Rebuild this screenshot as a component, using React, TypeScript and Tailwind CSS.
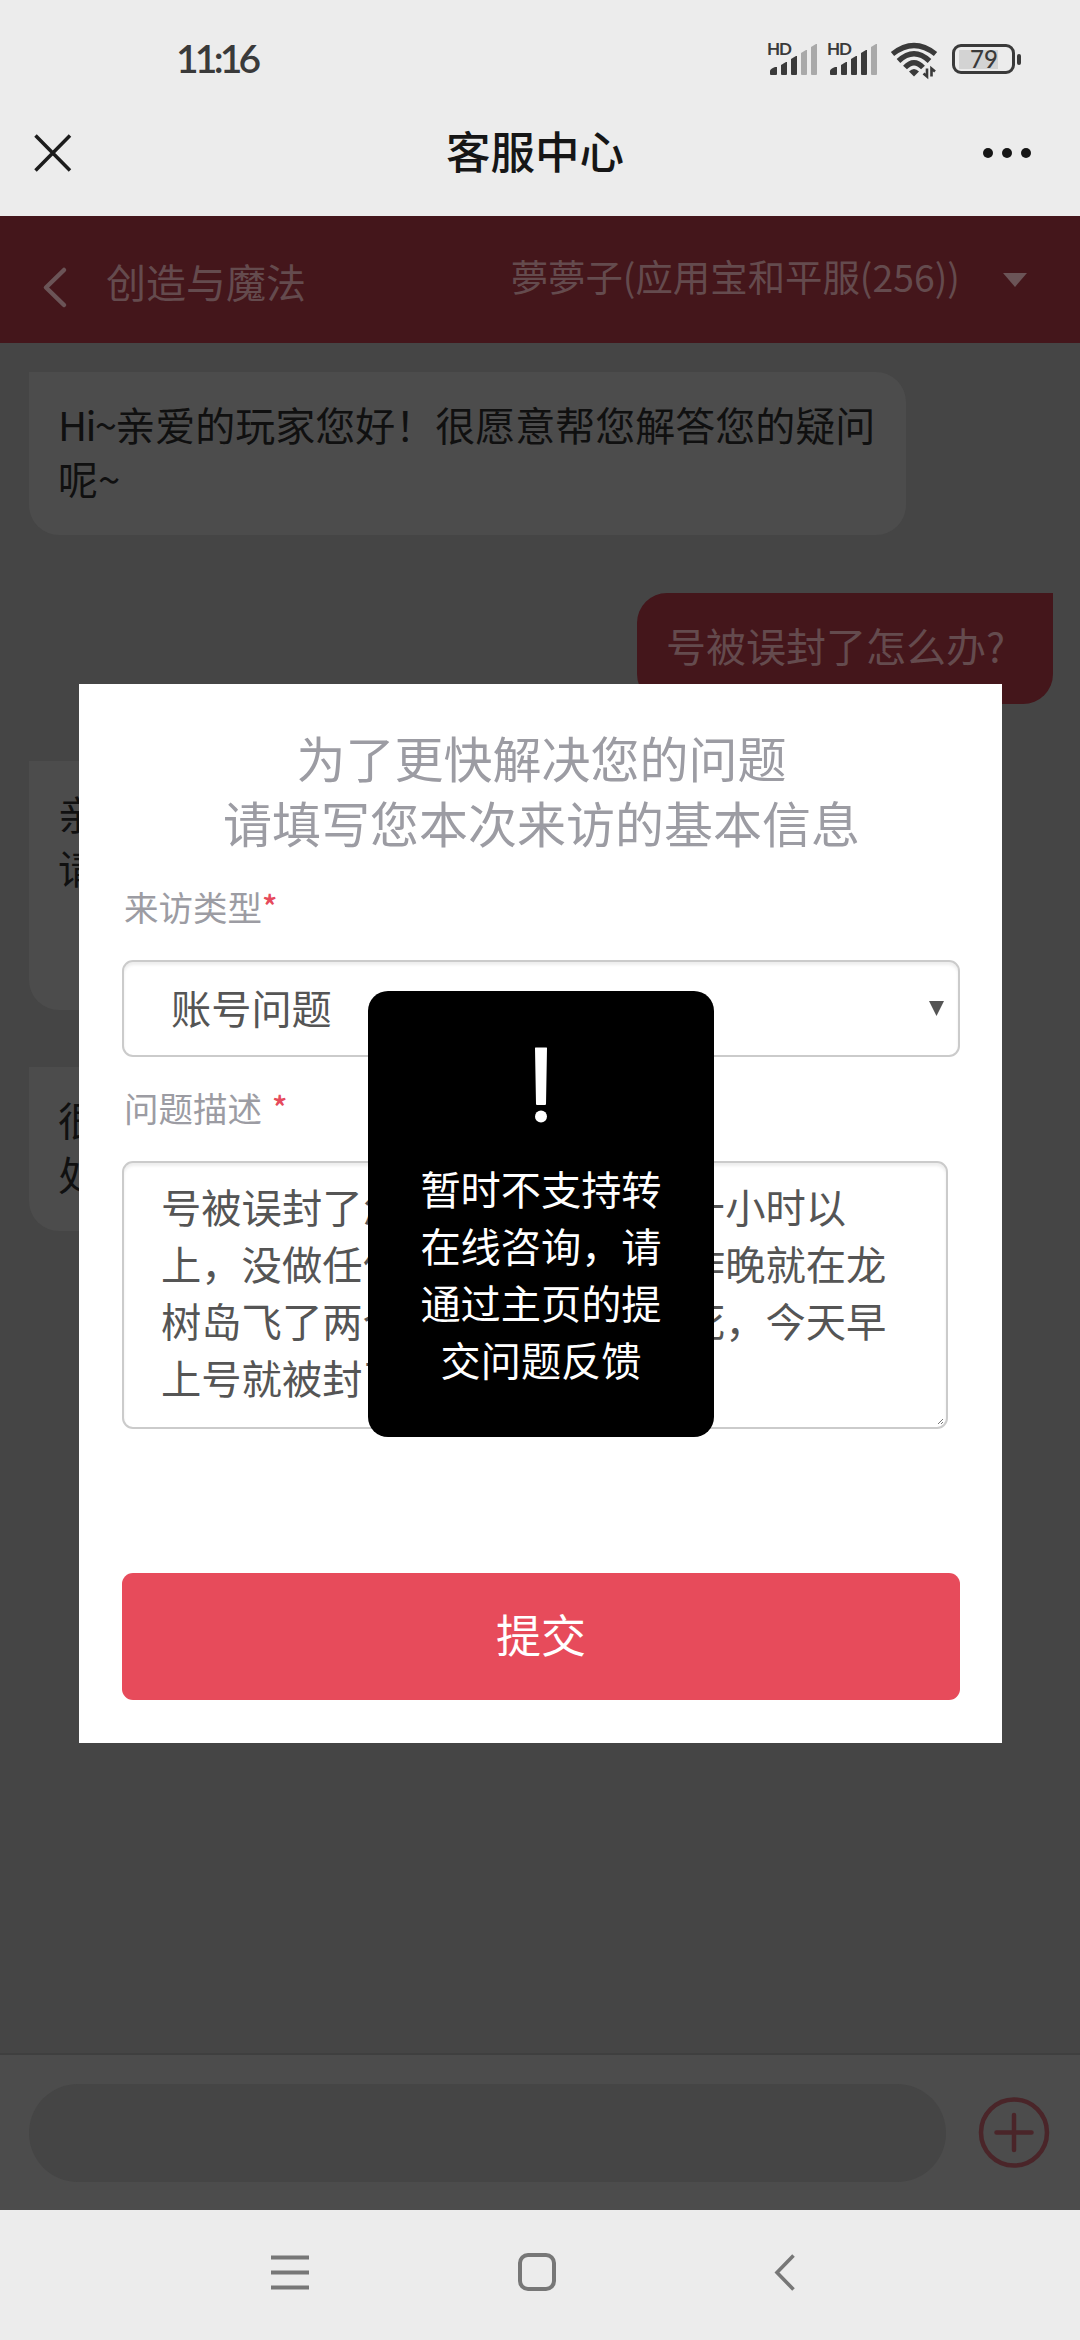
import React from "react";

const FONT = "font-['Noto_Sans_CJK_SC',sans-serif]";

interface BubbleProps {
  lines: React.ReactNode[];
  mine?: boolean;
  className: string;
}

const Bubble: React.FC<BubbleProps> = ({ lines, mine = false, className }) => (
  <div
    className={`shrink-0 px-[29px] pt-[26px] text-[40px] leading-[53.5px] whitespace-nowrap ${
      mine
        ? "self-end rounded-[30px] rounded-tr-none bg-[#44161b] text-[#644b4e]"
        : "self-start rounded-[30px] rounded-tl-none bg-[#4c4c4c] text-[#101010]"
    } ${className}`}
  >
    {lines.map((line, i) => (
      <div key={i}>{line}</div>
    ))}
  </div>
);

interface SignalProps {
  level: number;
}

const BARS = [
  "M2 30v-3q0-2 5-4h2v7q0 1-1 1h-5q-1 0-1-1z",
  "M13 30V21l5-3h1v12q0 1-1 1h-4q-1 0-1-1z",
  "M23 30V15l5-3h1v18q0 1-1 1h-4q-1 0-1-1z",
  "M33 30V9l5-3h1v24q0 1-1 1h-4q-1 0-1-1z",
  "M43 30V3l5-3h1v30q0 1-1 1h-4q-1 0-1-1z"
];

const Signal: React.FC<SignalProps> = ({ level }) => (
  <div className="relative h-[36px] w-[50px]">
    <span className="absolute left-[-1px] top-[-4px] font-['Lato',sans-serif] text-[17px] leading-[18px] font-bold tracking-[-1px] text-[#3a3a3a]">
      HD
    </span>
    <svg className="block" width="50" height="36" viewBox="0 0 50 36">
      {BARS.map((d, i) => (
        <path key={d} d={d} fill={i < level ? "#3a3a3a" : "#a9a9a9"} />
      ))}
    </svg>
  </div>
);

const StatusBar = () => (
  <div className="flex h-[100px] items-start justify-between pl-[176px] pr-[59px] text-[#3a3a3a]">
    <span className="mt-[35px] font-['Lato',sans-serif] text-[39px] leading-[47px] font-semibold tracking-[-3.8px]">
      11:16
    </span>
    <div className="mt-[44px] flex items-start">
      <Signal level={3} />
      <div className="w-[10px]" />
      <Signal level={4} />
      <svg className="ml-[12px] block overflow-visible" width="48" height="36" viewBox="0 0 48 36" fill="none" stroke="#3a3a3a" strokeWidth="5.300">
        <path d="M2.500 10Q24-7 45.500 10" />
        <path d="M8.500 17Q24 2.500 39.500 17" />
        <path d="M15 23.500Q24 14 33 23.500" />
        <path d="M19 27.500Q24 22.500 29 27.500L24 32.500Z" fill="#3a3a3a" stroke="none" />
        <path d="M37 24.500v8l-3.500-3M41.500 32.500v-8l3.500 3" strokeWidth="2.600" />
      </svg>
      {/* Battery */}
      <div className="ml-[14px] flex items-center">
        <div className="flex h-[30px] w-[63px] items-center rounded-[9px] border-[3px] border-[#3a3a3a] p-[4px]">
          <div className="relative h-[19px] w-[39px] bg-[#d3d3d3]">
            <span className="absolute left-[11px] top-[-3px] font-['Lato',sans-serif] text-[24px] leading-[24px] font-medium">79</span>
          </div>
        </div>
        <div className="ml-[2px] h-[11px] w-[4px] rounded-sm bg-[#3a3a3a]" />
      </div>
    </div>
  </div>
);

const TitleBar = () => (
  <div className="flex h-[116px] items-start justify-between pl-[33px] pr-[49px]">
    <svg className="mt-[33px] block" width="40" height="40" viewBox="0 0 40 40" stroke="#1c1c1c" strokeWidth="3.500">
      <path d="M2.500 2.500L37 37.500M37 2.500L2.500 37.500" />
    </svg>
    <h1 className="mt-[20px] ml-[14px] text-[44.500px] leading-[60px] font-medium text-[#161616]">客服中心</h1>
    <div className="mt-[48px] flex gap-[9px]">
      <i className="size-[10px] rounded-full bg-[#161616]" />
      <i className="size-[10px] rounded-full bg-[#161616]" />
      <i className="size-[10px] rounded-full bg-[#161616]" />
    </div>
  </div>
);

const GameBar = () => (
  <div className="flex h-[127px] shrink-0 items-start bg-[#44161b] pl-[42px] text-[#644b4e]">
    <svg className="mt-[50px] block" width="26" height="43" viewBox="0 0 26 43" fill="none" stroke="#6b5457" strokeWidth="4.500" strokeLinecap="round" strokeLinejoin="round">
      <path d="M22 4L4 21.500L22 39" />
    </svg>
    <span className="mt-[35px] ml-[38px] text-[40px] leading-[60px]">创造与魔法</span>
    <span className="mt-[32px] mr-[43px] ml-auto text-[37.400px] leading-[56px]">夢夢子(应用宝和平服(256))</span>
    <svg className="mt-[57px] mr-[53px] block" width="24" height="14" viewBox="0 0 24 14" fill="#6b5457">
      <path d="M0 0h24L12 14z" />
    </svg>
  </div>
);

const Chat = () => (
  <div className="flex h-[1710px] shrink-0 flex-col bg-[#454545] pr-[27px] pl-[29px]">
    <Bubble
      className="mt-[29px] h-[163px] w-[877px]"
      lines={[
        <>
          <span className="tracking-[-1.7px]">Hi~</span>亲爱的玩家您好！很愿意帮您解答您的疑问
        </>,
        "呢~"
      ]}
    />
    <Bubble mine className="mt-[58px] h-[111px] w-[416px]" lines={["号被误封了怎么办?"]} />
    <Bubble className="mt-[57px] h-[249px] w-[877px]" lines={["亲爱的玩家您好", "请您描述一下问题"]} />
    <Bubble className="mt-[57px] h-[164px] w-[877px]" lines={["很抱歉给您带来不便", "处理中请稍候"]} />
  </div>
);

const InputBar = () => (
  <div className="flex h-[157px] shrink-0 items-start justify-between border-t-2 border-[#3f3f3f] bg-[#4c4c4c] pt-[29px] pr-[30px] pl-[29px]">
    <div className="h-[98px] w-[917px] rounded-[49px] bg-[#454545]" />
    <svg className="mt-[12px] block" width="72" height="72" viewBox="0 0 72 72" fill="none" stroke="#4a2529" strokeWidth="4.500" strokeLinecap="round">
      <circle cx="36" cy="36.500" r="33" />
      <path d="M18.500 36.500h35M36 19v35" />
    </svg>
  </div>
);

const NavBar = () => (
  <div className="flex h-[130px] shrink-0 items-start bg-[#ececec] pt-[42px] pl-[271px]">
    <svg className="block" width="38" height="42" viewBox="0 0 38 42" stroke="#777" strokeWidth="3.800">
      <path d="M0 5.500h38M0 20.500h38M0 35.500h38" />
    </svg>
    <div className="ml-[209px] mt-px size-[38px] rounded-[10px] border-4 border-[#777]" />
    <svg className="ml-[217px] block" width="24" height="42" viewBox="0 0 24 42" fill="none" stroke="#777" strokeWidth="3.600">
      <path d="M20.500 3.500L4 20.500L20.500 37.500" />
    </svg>
  </div>
);

const FIELD = "rounded-[11px] border-2 border-[#cbcbcb] bg-white text-[#555] shadow-[inset_0_3px_3px_rgba(0,0,0,0.07)]";

const DESCRIPTION = [
  "号被误封了怎么办？我玩了二十小时以",
  "上，没做任何违规操作，就是昨晚就在龙",
  "树岛飞了两个小时还被别人打死，今天早",
  "上号就被封了"
];

const FormModal = () => (
  <div className="absolute top-[684px] left-[79px] flex h-[1059px] w-[923px] flex-col bg-white pl-[43px]">
    <h2 className="mt-[40px] mr-[41px] text-center text-[49px] leading-[65px] text-[#9c9ca3]">
      为了更快解决您的问题
      <br />
      请填写您本次来访的基本信息
    </h2>
    <div className="mt-[27px] flex h-[52px] items-center pl-[2px] text-[34.500px] text-[#9c9ca3]">
      来访类型
      <span className="mb-[5px] text-[32px] leading-[30px] font-medium text-[#e64a5c]">*</span>
    </div>
    <div className={`mt-[27px] flex h-[97px] w-[838px] items-center justify-between pr-[14px] pl-[47px] text-[40.200px] ${FIELD}`}>
      <span className="mb-[3px]">账号问题</span>
      <svg width="15" height="15" viewBox="0 0 15 15" fill="#555">
        <path d="M0 0h15L7.500 15z" />
      </svg>
    </div>
    <div className="mt-[25px] flex h-[52px] items-center pl-[2px] text-[34.500px] text-[#9c9ca3]">
      问题描述
      <span className="mb-[5px] ml-[10px] text-[32px] leading-[30px] font-medium text-[#e64a5c]">*</span>
    </div>
    <div className={`relative mt-[27px] h-[268px] w-[826px] pt-[14px] pl-[37px] text-[40.300px] leading-[57px] whitespace-nowrap ${FIELD}`}>
      {DESCRIPTION.map(line => (
        <div key={line}>{line}</div>
      ))}
      <svg className="absolute right-[2px] bottom-[2px]" width="6" height="6" viewBox="0 0 6 6" stroke="#777">
        <path d="M0 5L5 0M3 5L5 3" />
      </svg>
    </div>
    <button type="button" className="mt-[144px] h-[127px] w-[838px] rounded-[11px] bg-[#e74b5b] pb-[5px] text-[45px] text-white">
      提交
    </button>
  </div>
);

const Toast = () => (
  <div className="absolute top-[991px] left-[368px] flex h-[446px] w-[346px] flex-col items-center rounded-[20px] bg-black text-white">
    <svg className="mt-[56px] block" width="14" height="76" viewBox="0 0 14 76" fill="#fff">
      <path d="M1.500 0.500h11q.5 0 .5.600L12 57q0 1-1 1H3q-1 0-1-1L1 1.100q0-.6.5-.6z" />
      <circle cx="7" cy="69.500" r="6" />
    </svg>
    <p className="mt-[36px] w-[244px] text-center text-[40.200px] leading-[57px]">
      暂时不支持转
      <br />
      在线咨询，请
      <br />
      通过主页的提
      <br />
      交问题反馈
    </p>
  </div>
);

const App: React.FC = () => {
  return (
    <div className={`relative flex h-[2340px] w-[1080px] flex-col overflow-hidden bg-[#ececec] ${FONT}`}>
      <div className="h-[216px] shrink-0">
        <StatusBar />
        <TitleBar />
      </div>
      <GameBar />
      <Chat />
      <InputBar />
      <NavBar />
      <FormModal />
      <Toast />
    </div>
  );
};

export default App;
